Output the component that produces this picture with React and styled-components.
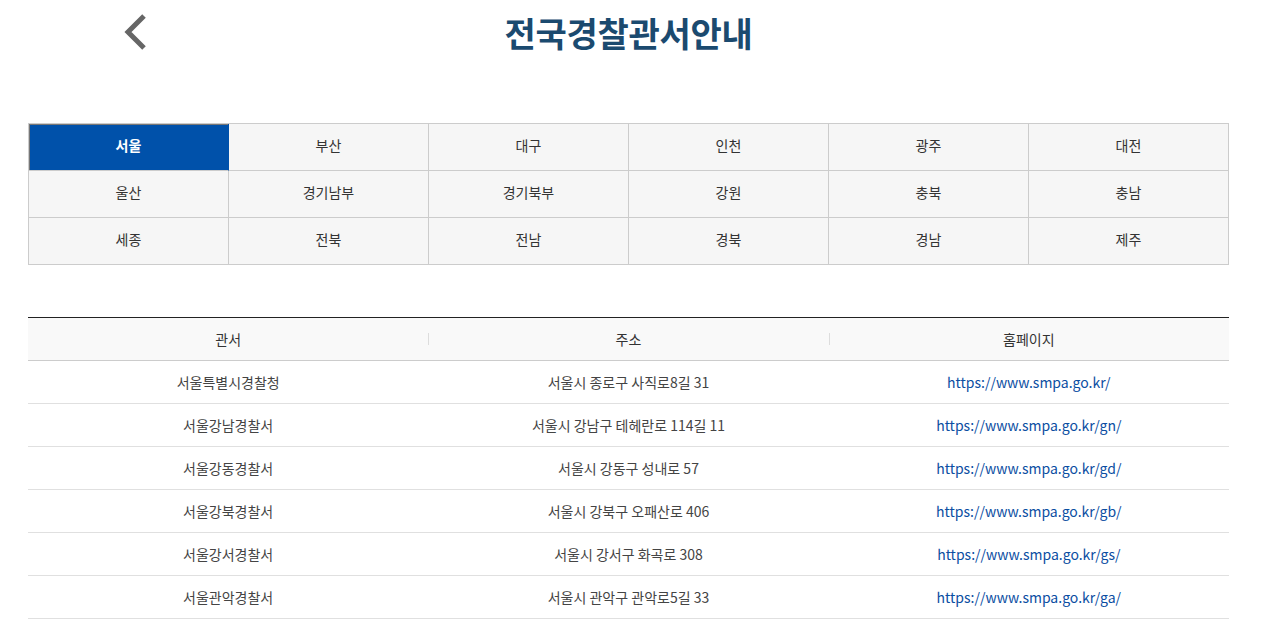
import React from "react";
import styled, { createGlobalStyle } from "styled-components";

const GlobalStyle = createGlobalStyle`
  body {
    margin: 0;
    background: #fff;
    font-family: "Noto Sans CJK KR", "Noto Sans", sans-serif;
    color: #333;
  }
`;

const regions = [
  "서울", "부산", "대구", "인천", "광주", "대전",
  "울산", "경기남부", "경기북부", "강원", "충북", "충남",
  "세종", "전북", "전남", "경북", "경남", "제주",
];

const stations = [
  { name: "서울특별시경찰청", addr: "서울시 종로구 사직로8길 31", url: "https://www.smpa.go.kr/" },
  { name: "서울강남경찰서", addr: "서울시 강남구 테헤란로 114길 11", url: "https://www.smpa.go.kr/gn/" },
  { name: "서울강동경찰서", addr: "서울시 강동구 성내로 57", url: "https://www.smpa.go.kr/gd/" },
  { name: "서울강북경찰서", addr: "서울시 강북구 오패산로 406", url: "https://www.smpa.go.kr/gb/" },
  { name: "서울강서경찰서", addr: "서울시 강서구 화곡로 308", url: "https://www.smpa.go.kr/gs/" },
  { name: "서울관악경찰서", addr: "서울시 관악구 관악로5길 33", url: "https://www.smpa.go.kr/ga/" },
];

const App = () => {
  const [active, setActive] = React.useState("서울");

  return (
    <>
      <GlobalStyle />
      <Page>
        <Header>
          <BackBtn aria-label="뒤로">
            <svg width="26" height="38" viewBox="0 0 26 38">
              <path d="M22 3 L6 19 L22 35" fill="none" stroke="#666" strokeWidth="5" />
            </svg>
          </BackBtn>
          <Title>전국경찰관서안내</Title>
        </Header>

        <RegionGrid>
          {regions.map((r) => (
            <RegionCell key={r} active={r === active} onClick={() => setActive(r)}>
              {r}
            </RegionCell>
          ))}
        </RegionGrid>

        <Table>
          <thead>
            <tr>
              <Th>관서</Th>
              <Th divider>주소</Th>
              <Th divider>홈페이지</Th>
            </tr>
          </thead>
          <tbody>
            {stations.map((s) => (
              <tr key={s.name}>
                <Td>{s.name}</Td>
                <Td>{s.addr}</Td>
                <Td>
                  <Link href={s.url}>{s.url}</Link>
                </Td>
              </tr>
            ))}
          </tbody>
        </Table>
      </Page>
    </>
  );
};

const Page = styled.div`
  width: 1201px;
  margin-left: 28px;
`;

const Header = styled.header`
  position: relative;
  height: 66px;
  display: flex;
  align-items: center;
  justify-content: center;
`;

const BackBtn = styled.button`
  position: absolute;
  left: 94px;
  top: 13px;
  padding: 0;
  border: none;
  background: transparent;
  cursor: pointer;
  display: flex;
`;

const Title = styled.h1`
  margin: 0 0 2px;
  font-size: 34px;
  font-weight: 700;
  color: #1b4a6f;
  letter-spacing: -0.3px;
`;

const RegionGrid = styled.div`
  margin-top: 57px;
  display: grid;
  grid-template-columns: repeat(6, 1fr);
  border-top: 1px solid #ccc;
  border-left: 1px solid #ccc;
`;

const RegionCell = styled.div`
  height: 47px;
  padding-bottom: 4px;
  box-sizing: border-box;
  display: flex;
  align-items: center;
  justify-content: center;
  font-size: 14px;
  border-right: 1px solid #ccc;
  border-bottom: 1px solid #ccc;
  background: ${(props) => (props.active ? "#0051aa" : "#f6f6f6")};
  color: ${(props) => (props.active ? "#fff" : "#333")};
  font-weight: ${(props) => (props.active ? 700 : 400)};
  cursor: pointer;
  ${(props) =>
    props.active &&
    `
    box-shadow: inset 1px 1px 0 #777;
    border-right-color: #0051aa;
  `}
`;

const Table = styled.table`
  margin-top: 52px;
  width: 100%;
  border-collapse: collapse;
  table-layout: fixed;
  border-top: 1px solid #222;
`;

const Th = styled.th`
  position: relative;
  height: 42px;
  padding: 0;
  font-size: 14px;
  font-weight: 400;
  color: #333;
  background: #f9f9f9;
  border-bottom: 1px solid #ccc;

  ${(props) =>
    props.divider &&
    `
    &::before {
      content: "";
      position: absolute;
      left: 0;
      top: 15px;
      height: 12px;
      width: 1px;
      background: #ddd;
    }
  `}
`;

const Td = styled.td`
  height: 42px;
  padding: 0;
  text-align: center;
  font-size: 14px;
  color: #444;
  border-bottom: 1px solid #e0e0e0;
`;

const Link = styled.a`
  color: #0b4ea2;
  text-decoration: none;
  font-size: 14px;
`;

export default App;
